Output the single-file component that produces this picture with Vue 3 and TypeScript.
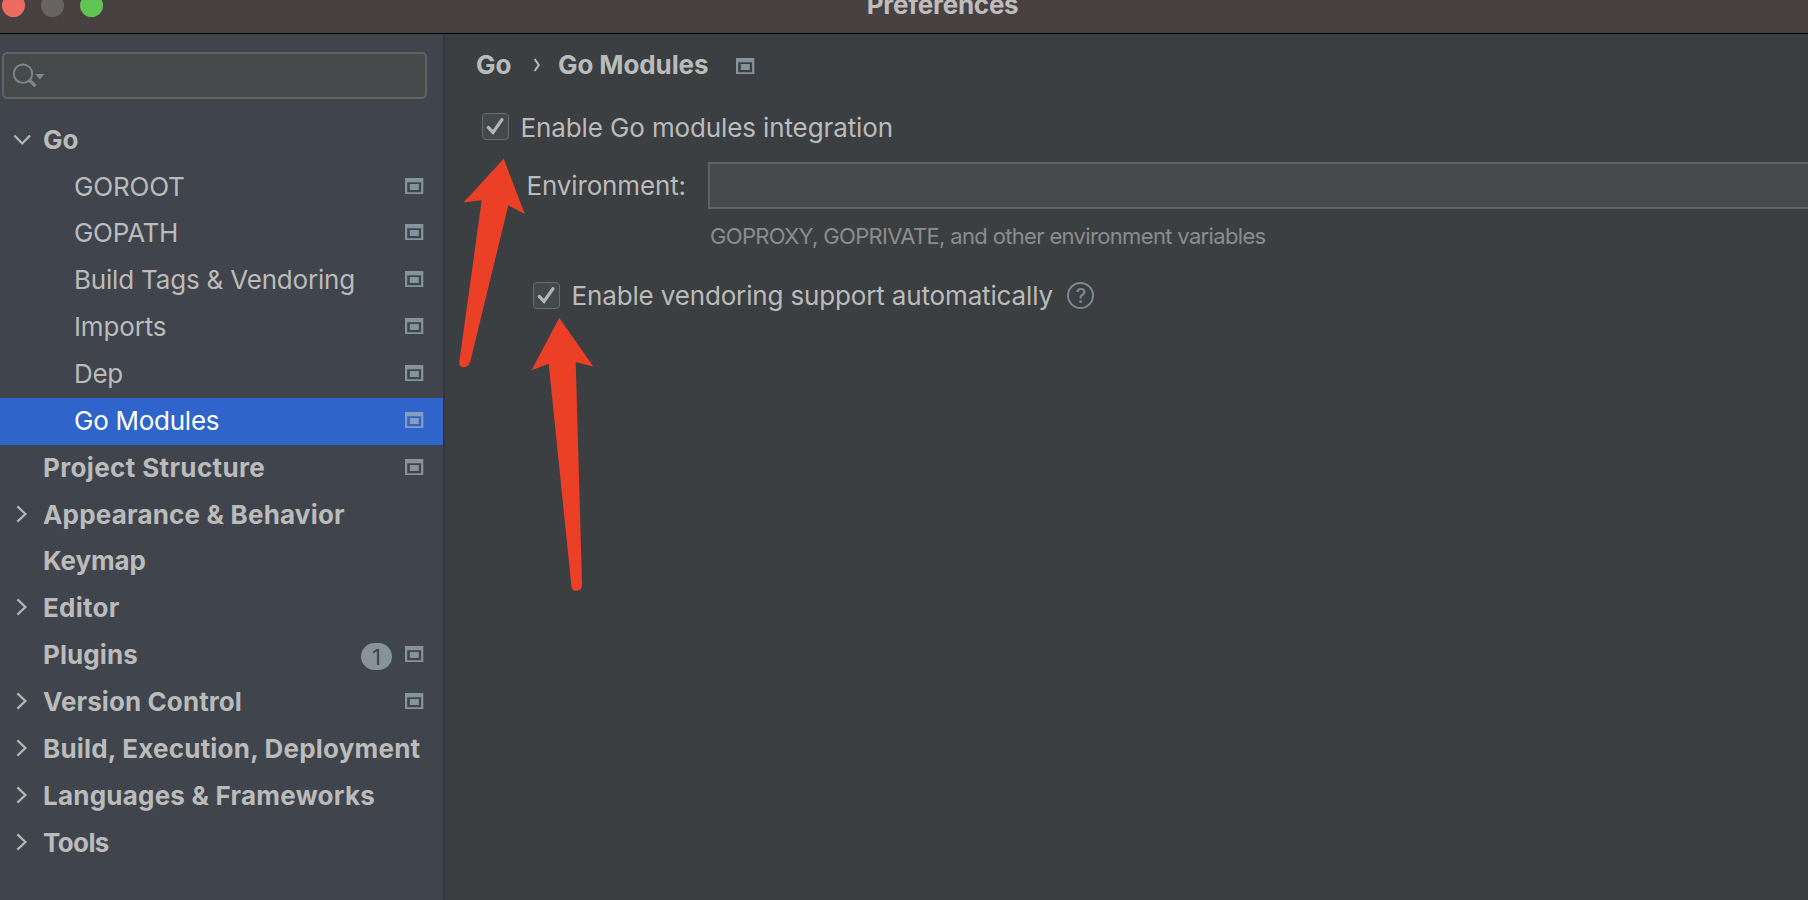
<script setup lang="ts">
interface TreeItem {
  label: string
  child?: boolean
  arrow?: 'right' | 'down'
  project?: boolean
  badge?: number
  selected?: boolean
  tracking: number
}

const items: TreeItem[] = [
  { label: 'Go', arrow: 'down', tracking: 0.1 },
  { label: 'GOROOT', child: true, project: true, tracking: -0.18 },
  { label: 'GOPATH', child: true, project: true, tracking: -0.28 },
  { label: 'Build Tags & Vendoring', child: true, project: true, tracking: -0.19 },
  { label: 'Imports', child: true, project: true, tracking: -0.14 },
  { label: 'Dep', child: true, project: true, tracking: -0.3 },
  { label: 'Go Modules', child: true, project: true, selected: true, tracking: -0.26 },
  { label: 'Project Structure', project: true, tracking: 0.36 },
  { label: 'Appearance & Behavior', arrow: 'right', tracking: 0.19 },
  { label: 'Keymap', tracking: -0.15 },
  { label: 'Editor', arrow: 'right', tracking: 0.26 },
  { label: 'Plugins', project: true, badge: 1, tracking: 0.08 },
  { label: 'Version Control', arrow: 'right', project: true, tracking: 0.09 },
  { label: 'Build, Execution, Deployment', arrow: 'right', tracking: 0.2 },
  { label: 'Languages & Frameworks', arrow: 'right', tracking: 0.22 },
  { label: 'Tools', arrow: 'right', tracking: -0.6 },
]

const windowIcon = 'M0 0H18.3V16H0ZM2.2 4.2V14.2H16.1V4.2ZM4.8 6.1H13.8V12H4.8Z'
</script>

<template>
  <div class="window">
    <header class="titlebar">
      <div class="titlerow">
        <span class="light red"></span>
        <span class="light grey"></span>
        <span class="light green"></span>
        <span class="title">Preferences</span>
      </div>
    </header>

    <div class="body">
      <aside class="sidebar">
        <div class="search">
          <svg width="40" height="30" viewBox="0 0 40 30">
            <circle cx="14" cy="12.7" r="9.2" fill="none" stroke="#7c878e" stroke-width="1.9" />
            <path d="M20.2 19L26.4 25.2" stroke="#7c878e" stroke-width="3.2" />
            <path d="M26.2 13H35.4L30.8 18.6Z" fill="#7c878e" />
          </svg>
        </div>
        <ul class="tree">
          <li
            v-for="item in items"
            :key="item.label"
            class="row"
            :class="{ child: item.child, selected: item.selected }"
          >
            <span class="toggle">
              <svg v-if="item.arrow === 'right'" width="20" height="20" viewBox="0 0 20 20">
                <path d="M5.4 2.4L13.4 10L5.4 17.6" />
              </svg>
              <svg v-else-if="item.arrow === 'down'" width="20" height="20" viewBox="0 0 20 20">
                <path d="M2.4 6.5L10.2 14.5L18 6.5" />
              </svg>
            </span>
            <span class="label" :style="{ letterSpacing: item.tracking + 'px' }">{{ item.label }}</span>
            <span v-if="item.badge" class="badge">{{ item.badge }}</span>
            <svg v-if="item.project" class="project" width="19" height="16" viewBox="0 0 19 16">
              <path :d="windowIcon" />
            </svg>
          </li>
        </ul>
      </aside>

      <main class="content">
        <div class="crumbs">
          <span>Go</span>
          <svg class="sep" width="8" height="14" viewBox="0 0 8 14">
            <path d="M1.6 1L5.8 7L1.6 13" fill="none" stroke="#bbbbbb" stroke-width="2" />
          </svg>
          <span class="current">Go Modules</span>
          <svg class="project" width="19" height="16" viewBox="0 0 19 16">
            <path :d="windowIcon" />
          </svg>
        </div>

        <div class="check first">
          <span class="box">
            <svg width="27" height="27" viewBox="0 0 27 27"><path d="M6.3 14.4L11 19.4L20 6.6" /></svg>
          </span>
          <span class="checklabel">Enable Go modules integration</span>
        </div>

        <div class="field">
          <label class="envlabel">Environment:</label>
          <div class="input"></div>
        </div>
        <p class="hint">GOPROXY, GOPRIVATE, and other environment variables</p>

        <div class="check second">
          <span class="box">
            <svg width="27" height="27" viewBox="0 0 27 27"><path d="M6.3 14.4L11 19.4L20 6.6" /></svg>
          </span>
          <span class="checklabel vendoring">Enable vendoring support automatically</span>
          <span class="help">?</span>
        </div>
      </main>
    </div>

    <svg class="arrows" width="1808" height="900" viewBox="0 0 1808 900">
      <path d="M503.7 158.8L524.8 213.9L508.3 205.3L470.9 359C469.5 364.5 467.6 367.2 464.3 367.2C461.5 367.2 459 366 459.3 362L481.7 200.3L463.5 202.5Z" />
      <path d="M559.3 318L593.3 366.4L575.7 362L582 584C582 588.5 580.5 590.6 576.7 590.7C573 590.7 571.6 589.5 571.3 585L548.7 363.7L531.5 370.3Z" />
    </svg>
  </div>
</template>

<style>
body {
  margin: 0;
  background: #3c3f41;
}
</style>

<style scoped>
.window {
  position: relative;
  display: flex;
  flex-direction: column;
  width: 1808px;
  height: 900px;
  overflow: hidden;
  box-sizing: border-box;
  background: #3c3f41;
  color: #bbbbbb;
  font: 400 26px/30px Inter, "Liberation Sans", sans-serif;
}
.titlebar {
  flex: none;
  height: 34px;
  box-sizing: border-box;
  border-bottom: 1px solid #000000;
  background: #474241;
  overflow: hidden;
}
.titlerow {
  display: flex;
  align-items: center;
  height: 30px;
  margin-top: -9.5px;
  padding-left: 1.7px;
}
.light {
  flex: none;
  width: 23.4px;
  height: 23.4px;
  margin-right: 15.6px;
  border-radius: 50%;
}
.red { background: #ed6b60; }
.grey { background: #686463; }
.green { background: #61c555; }
.title {
  margin: -1px 0 0 748px;
  color: #bfbcbb;
  font-weight: 700;
  letter-spacing: -0.25px;
}
.body {
  flex: 1;
  display: flex;
  min-height: 0;
}
.sidebar {
  flex: none;
  width: 445px;
  box-sizing: border-box;
  border-right: 2px solid #34373a;
  padding-top: 18px;
  background: #40444c;
}
.search {
  width: 425px;
  height: 47px;
  margin-left: 2px;
  padding: 7px 0 0 5px;
  box-sizing: border-box;
  border: 2px solid #626262;
  border-radius: 5px;
  background: #45494a;
}
.search svg {
  display: block;
}
.tree {
  margin: 17.8px 0 0;
  padding: 0;
  list-style: none;
}
.row {
  display: flex;
  align-items: center;
  height: 46.87px;
  box-sizing: border-box;
  padding: 0 19px 3px 0;
  font-weight: 700;
  white-space: nowrap;
}
.row.child {
  font-weight: 400;
}
.row.selected {
  background: #2f65ca;
  color: #ffffff;
}
.toggle {
  flex: none;
  width: 31px;
  height: 20px;
  padding-left: 12px;
}
.child .toggle {
  width: 62px;
}
.toggle svg {
  display: block;
}
.toggle path {
  fill: none;
  stroke: #b4b6b8;
  stroke-width: 2.2px;
}
.label {
  flex: 1;
  padding-top: 2px;
}
.project {
  flex: none;
  fill: #87939c;
  fill-rule: evenodd;
}
.badge {
  flex: none;
  width: 31px;
  height: 27px;
  margin: 4px 13px 0 0;
  border-radius: 13.5px;
  background: #87939a;
  color: #40444c;
  font-size: 22px;
  font-weight: 400;
  line-height: 28px;
  text-align: center;
}
.selected .project {
  fill: #8a9cbb;
}
.content {
  flex: 1;
  min-width: 0;
}
.crumbs {
  display: flex;
  align-items: center;
  height: 30px;
  margin: 16px 0 0 31px;
  font-weight: 700;
}
.sep {
  margin: 0 17px 0 21.5px;
}
.current {
  letter-spacing: -0.1px;
}
.crumbs .project {
  margin: 2px 0 0 28px;
}
.check {
  display: flex;
  align-items: center;
  height: 27px;
}
.first {
  margin: 33px 0 0 37px;
}
.second {
  margin: 33px 0 0 87.5px;
}
.box {
  flex: none;
  width: 27px;
  height: 27px;
  box-sizing: border-box;
  border: 1.5px solid #6b6b6b;
  border-radius: 4px;
  background: #43494a;
}
.box svg {
  display: block;
  margin: -1px;
}
.box path {
  fill: none;
  stroke: #b4b6b6;
  stroke-width: 3.2px;
  stroke-linecap: round;
}
.checklabel {
  margin-left: 11.5px;
  padding-top: 2px;
  letter-spacing: -0.12px;
  white-space: nowrap;
}
.vendoring {
  margin-left: 12px;
  padding-top: 1px;
  letter-spacing: -0.15px;
}
.help {
  width: 27px;
  height: 27px;
  margin: 0 0 0 14.5px;
  box-sizing: border-box;
  border: 2px solid #7d8990;
  border-radius: 50%;
  color: #7d8990;
  font-size: 20px;
  font-weight: 500;
  line-height: 24px;
  text-align: center;
}
.field {
  display: flex;
  align-items: center;
  height: 47px;
  margin: 22px 0 0 81.5px;
}
.envlabel {
  width: 181.5px;
  padding-top: 1px;
  letter-spacing: -0.14px;
}
.input {
  flex: 1;
  height: 47px;
  box-sizing: border-box;
  border: 2px solid #606162;
  border-right: 0;
  background: #45494a;
}
.hint {
  height: 26px;
  margin: 14px 0 0 265px;
  color: #8c8c8c;
  font-size: 22px;
  line-height: 26px;
  letter-spacing: -0.66px;
  white-space: nowrap;
}
.arrows {
  position: absolute;
  top: 0;
  left: 0;
  fill: #ec4026;
  pointer-events: none;
}
</style>
